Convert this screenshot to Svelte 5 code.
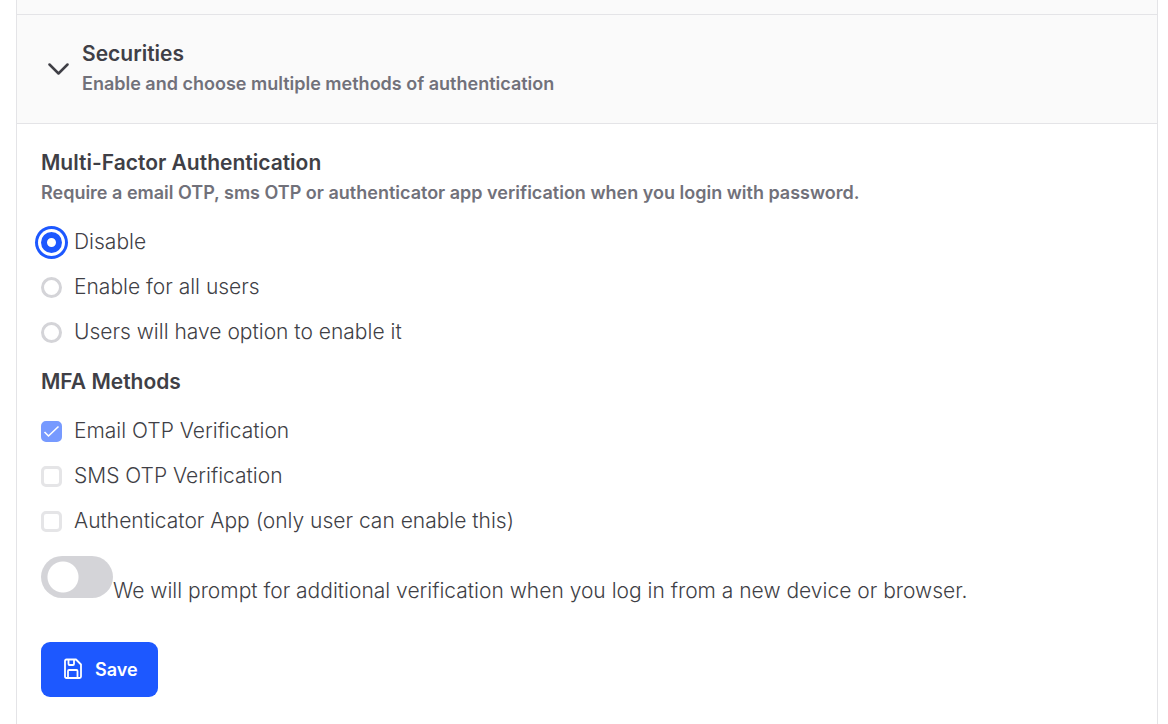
<script>
  let mode = $state('disable');
  let newDevice = $state(false);
  const modes = [
    ['disable', 'Disable'],
    ['all', 'Enable for all users'],
    ['optional', 'Users will have option to enable it']
  ];
  const methods = [
    ['email', 'Email OTP Verification', true],
    ['sms', 'SMS OTP Verification', false],
    ['app', 'Authenticator App (only user can enable this)', false]
  ];
</script>

<main class="accordion">
  <div class="previous"></div>
  <button class="header" type="button" aria-expanded="true">
    <svg class="chevron" width="22" height="14" viewBox="0 0 22 14" fill="none" aria-hidden="true">
      <path d="M1.500 2.500 10.500 11.500 19.500 2.500" stroke="#3f3f46" stroke-width="2.500" stroke-linecap="round" stroke-linejoin="round" />
    </svg>
    <span class="heading">
      <span class="title">Securities</span>
      <span class="sub">Enable and choose multiple methods of authentication</span>
    </span>
  </button>
  <form class="body" onsubmit={(e) => e.preventDefault()}>
    <h2 class="title">Multi-Factor Authentication</h2>
    <p class="sub">Require a email OTP, sms OTP or authenticator app verification when you login with password.</p>
    <div class="options">
      {#each modes as [value, text]}
        <label class="option">
          <input type="radio" name="mode" {value} bind:group={mode} />
          <span>{text}</span>
        </label>
      {/each}
    </div>
    <h2 class="title">MFA Methods</h2>
    <div class="options">
      {#each methods as [name, text, on]}
        <label class="option">
          <span class="box">
            <input type="checkbox" {name} checked={on} disabled />
            {#if on}
              <svg class="tick" width="21" height="21" viewBox="0 0 21 21" fill="none" aria-hidden="true">
                <path d="M3.500 11 7.500 15 17.500 5.500" stroke="#fff" stroke-width="1.600" />
              </svg>
            {/if}
          </span>
          <span>{text}</span>
        </label>
      {/each}
    </div>
    <label class="prompt">
      <input class="switch" type="checkbox" role="switch" bind:checked={newDevice} />
      <span>We will prompt for additional verification when you log in from a new device or browser.</span>
    </label>
    <button class="save" type="submit">
      <svg width="20" height="24" viewBox="0 0 20 24" fill="none" stroke="#fff" stroke-width="1.800" stroke-linejoin="round" aria-hidden="true">
        <path d="M3.500 1.500H13L18 6.500V18.500Q18 20 16.500 20H3.500Q2 20 2 18.500V3Q2 1.500 3.500 1.500ZM5.500 1.500V6Q5.500 7 6.500 7H10Q11 7 11 6V1.500M5 20V13Q5 12 6 12H13.500Q14.500 12 14.500 13V20" />
      </svg>
      Save
    </button>
  </form>
</main>

<style>
  :global(body) {
    background: #fff;
  }
  .accordion {
    margin: 0 10px 0 16px;
    border: solid #e4e4e7;
    border-width: 0 1px;
    min-height: 100vh;
    box-sizing: border-box;
    font-family: Inter, sans-serif;
    font-size: 21px;
    font-weight: 300;
    color: #3f3f46;
  }
  .previous {
    height: 14px;
    background: #fafafa;
  }
  .header {
    display: flex;
    align-items: center;
    gap: 12px;
    width: 100%;
    padding: 24px 31px;
    border: solid #e4e4e7;
    border-width: 1px 0;
    background: #fafafa;
    font: inherit;
    color: inherit;
    text-align: left;
  }
  .heading {
    display: flex;
    flex-direction: column;
  }
  .title {
    margin: 0;
    font-size: 21px;
    font-weight: 600;
    line-height: 30px;
  }
  .sub {
    margin: 0;
    font-size: 18px;
    font-weight: 600;
    line-height: 30px;
    color: #71717a;
  }
  .body {
    padding: 24px;
  }
  .options {
    display: flex;
    flex-direction: column;
    gap: 15px;
    padding: 19px 0 20px;
  }
  .option {
    display: flex;
    align-items: center;
    gap: 12px;
    line-height: 30px;
  }
  input {
    appearance: none;
    display: block;
    flex: none;
    box-sizing: border-box;
    width: 21px;
    height: 21px;
    margin: 0;
    border: 3px solid #d4d4d8;
    background: #fff;
  }
  [type='radio'] {
    border-radius: 50%;
  }
  [type='radio']:checked {
    border: 6px solid #1d58ff;
    box-shadow: 0 0 0 3px #fff, 0 0 0 6px #1d58ff;
  }
  [type='checkbox'] {
    border-radius: 5px;
  }
  [type='checkbox']:disabled {
    opacity: 0.6;
  }
  [type='checkbox']:disabled:checked {
    border-color: #1d58ff;
    background: #1d58ff;
  }
  .box {
    position: relative;
  }
  .tick {
    position: absolute;
    top: 0;
    left: 0;
  }
  .prompt {
    display: flex;
    line-height: 30px;
  }
  .prompt .switch {
    width: 72px;
    height: 42px;
    border: 0;
    border-radius: 21px;
    background: radial-gradient(circle at 22px 21px, #fff 15px, #d4d4d8 16px);
  }
  .prompt .switch:checked {
    background: radial-gradient(circle at 50px 21px, #fff 15px, #1d58ff 16px);
  }
  .prompt span {
    padding-top: 20px;
  }
  .save {
    display: flex;
    align-items: center;
    gap: 12px;
    height: 55px;
    margin-top: 36px;
    padding: 0 20px 0 22px;
    border: 0;
    border-radius: 9px;
    background: #1d58ff;
    font: 600 18px Inter, sans-serif;
    color: #fff;
  }
</style>
